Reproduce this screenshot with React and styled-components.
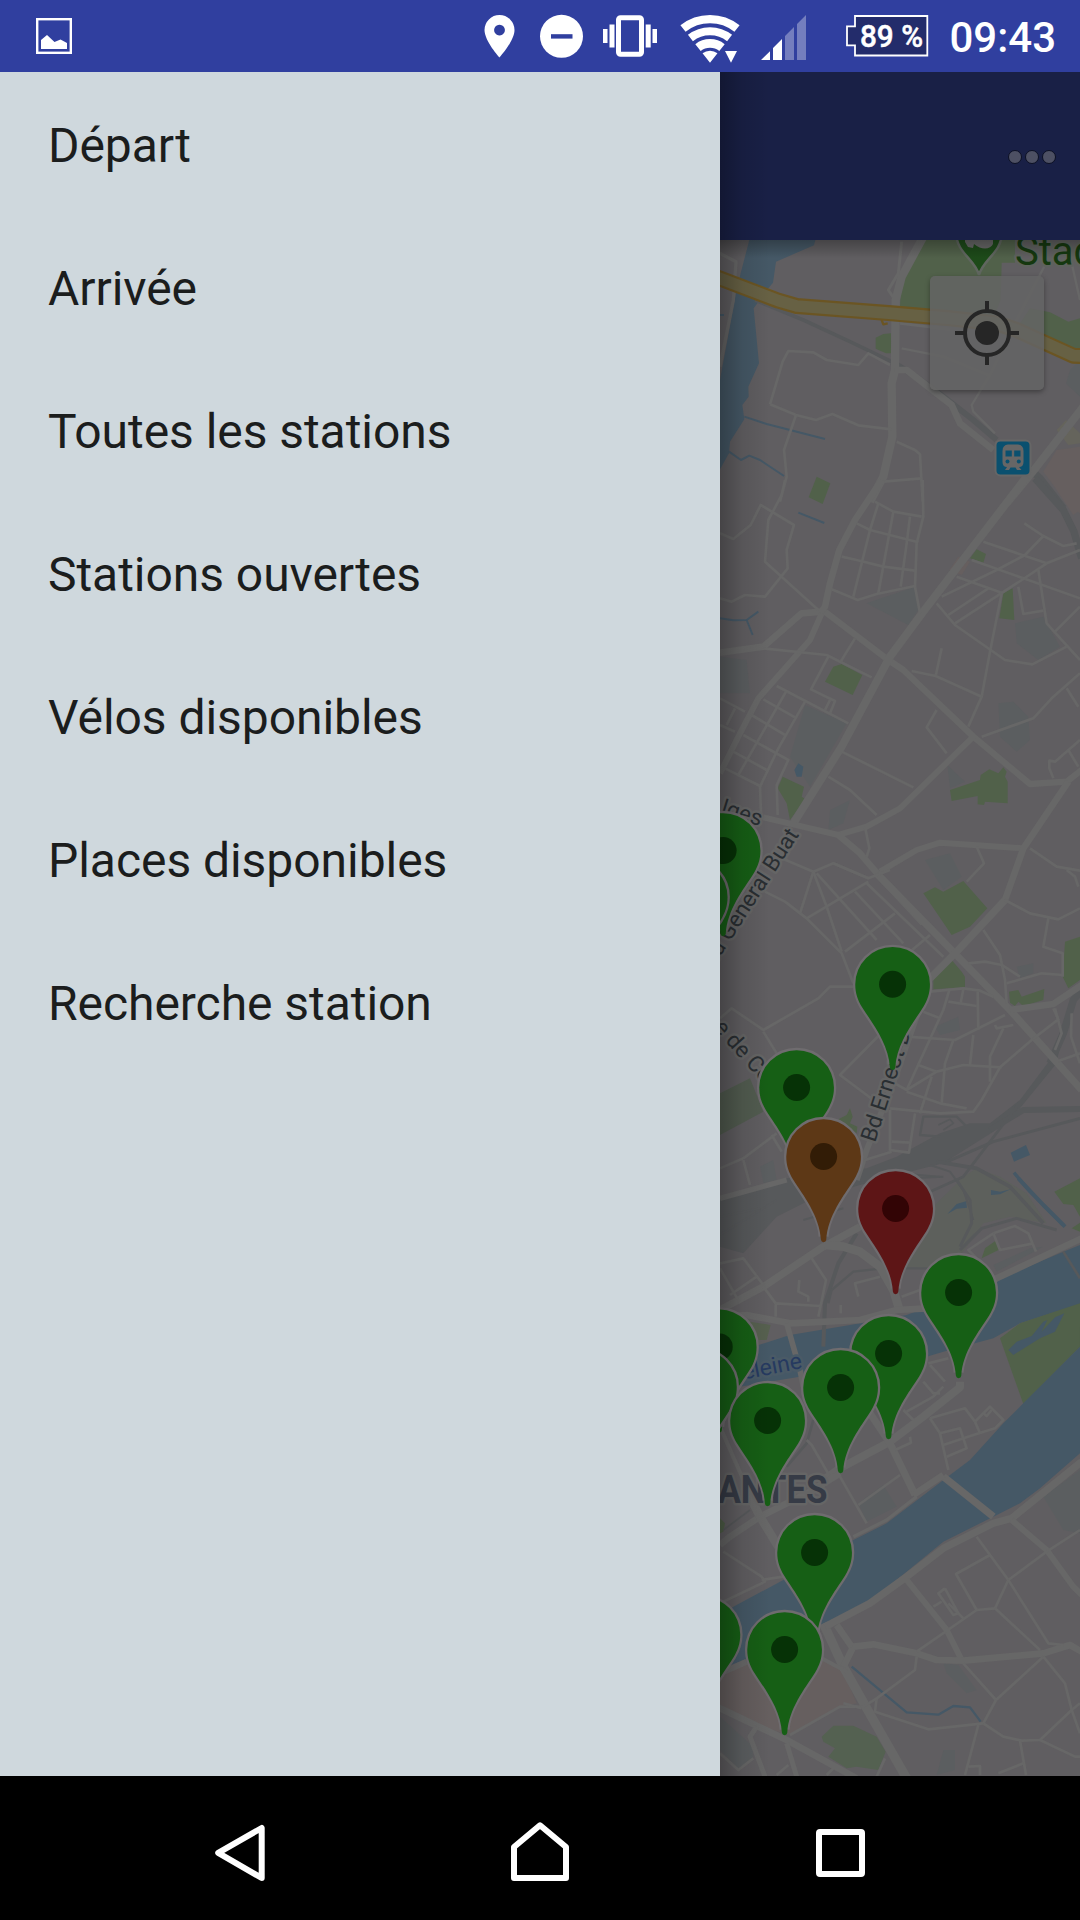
import React from "react";
import styled, { createGlobalStyle } from "styled-components";

const GlobalStyle = createGlobalStyle`
  body { margin: 0; background: #000; }
  svg { display: block; }
`;

const Screen = styled.div`
  display: flex;
  flex-direction: column;
  width: 1080px;
  height: 1920px;
  overflow: hidden;
  font-family: Roboto, "Noto Sans", sans-serif;
`;

const StatusBar = styled.header`
  display: flex;
  align-items: center;
  height: 72px;
  flex: none;
  background: #303f9f;
  color: #fff;
`;

const StatusIcon = styled.svg`
  flex: none;
  height: 72px;
  width: ${(p) => p.$w}px;
  margin-left: ${(p) => p.$gap};
`;

const Clock = styled.time`
  margin-left: 20px;
  font-size: 42px;
  font-weight: 500;
  line-height: 72px;
  white-space: nowrap;
  padding-top: 3px;
`;

const Main = styled.main`
  display: flex;
  height: 1704px;
  flex: none;
`;

const Drawer = styled.nav`
  width: 720px;
  flex: none;
  background: #cfd8dd;
`;

const MenuList = styled.ul`
  list-style: none;
  margin: 0;
  padding: 0;
`;

const MenuItem = styled.li`
  display: flex;
  align-items: center;
  height: 143px;
  padding: 4px 48px 0;
  box-sizing: border-box;
  font-size: 48px;
  letter-spacing: -0.05px;
  color: #1b1d1d;
`;

const Content = styled.section`
  position: relative;
  display: flex;
  flex-direction: column;
  width: 360px;
  flex: none;
`;

const DrawerShadow = styled.div`
  position: absolute;
  inset: 0 auto 0 0;
  width: 50px;
  background: linear-gradient(90deg, rgba(0, 0, 0, 0.28), rgba(0, 0, 0, 0.09) 45%, rgba(0, 0, 0, 0));
`;

const Toolbar = styled.div`
  display: flex;
  align-items: center;
  justify-content: flex-end;
  gap: 3px;
  height: 168px;
  flex: none;
  box-sizing: border-box;
  padding: 2px 24px 0 0;
  background: #192046;
`;

const Dot = styled.span`
  width: 12px;
  height: 12px;
  border-radius: 50%;
  background: #4d5063;
  border: 1px solid #0c1024;
`;

const MapArea = styled.div`
  position: relative;
  height: 1536px;
  overflow: hidden;
  background: #605e61;
`;

const MapShade = styled.div`
  position: absolute;
  inset: 0 0 auto 0;
  height: 18px;
  background: linear-gradient(rgba(0, 0, 0, 0.28), rgba(0, 0, 0, 0));
`;

const LocateButton = styled.button`
  position: absolute;
  top: 36px;
  right: 36px;
  width: 114px;
  height: 114px;
  padding: 0;
  border: 0;
  border-radius: 5px;
  display: grid;
  place-items: center;
  background: rgba(100, 100, 100, 0.86);
  box-shadow: 0 2px 5px rgba(0, 0, 0, 0.35);
`;

const NavBar = styled.footer`
  display: grid;
  grid-template-columns: repeat(3, 300px);
  justify-content: center;
  justify-items: center;
  align-items: center;
  height: 144px;
  flex: none;
  background: #000;
`;

const ITEMS = [
  "Départ",
  "Arrivée",
  "Toutes les stations",
  "Stations ouvertes",
  "Vélos disponibles",
  "Places disponibles",
  "Recherche station",
];

const PINS = [
  [723.1, 850.5, "green"],
  [690.2, 897, "green"],
  [892.6, 984.3, "green"],
  [796.6, 1087.5, "green"],
  [823.6, 1156.5, "orange"],
  [895.6, 1208.5, "red"],
  [958.6, 1292.5, "green"],
  [719.2, 1346.9, "green"],
  [888.6, 1353.5, "green"],
  [699.4, 1386.9, "green"],
  [840.6, 1387.5, "green"],
  [767.6, 1420.5, "green"],
  [814.6, 1552.5, "green"],
  [702.9, 1634.5, "green"],
  [784.6, 1649.5, "green"],
];

const PIN_COLORS = {
  green: ["#165f15", "#063206"],
  orange: ["#5d3816", "#321c06"],
  red: ["#5d1516", "#320405"],
};

const WATER = "#455866";
const PARK = "#51614a";
const ROAD = "#676767";
const RAIL = "#57595b";
const BUILT = "#5b5e60";
const PINK = "#665f5f";

// Each tile keeps its own 3x grid: origin, then layers from bottom to top.
const TILES = [
  {
    at: [710, 60],
    areas: [
      [WATER, "118,540 118,480 316,480 316,540 312,556 198,605 189,668 175,685 131,745 147,910 115,980 116,1010 97,1035 103,1078 60,1145 57,1180 30,1228 30,960 78,700 92,640"],
      [PARK, "640,540 915,540 915,608 875,608 872,720 850,775 570,740 574,665"],
      [PARK, "930,790 960,745 1020,757 1075,785 1110,775 1110,880 1080,870 1000,830"],
      [PARK, "497,833 520,822 543,820 543,880 528,880 497,866"],
      [BUILT, "1080,930 1110,900 1110,1010 1068,970"],
      ["#65645c", "1040,1110 1068,1080 1110,1120 1110,1150 1075,1155"],
      [PINK, "1110,1160 1040,1170 1000,1235 1080,1340 1110,1360"],
    ],
    lines: [
      [RAIL, 11, "135,720 280,780 420,845 545,905"],
      [RAIL, 18, "545,905 610,945 700,1010 790,1080 860,1140"],
      [RAIL, 22, "940,1210 990,1255 1060,1345"],
      [WATER, 6, "103,1070 170,1092 345,1137"],
      [WATER, 6, "57,1175 93,1200 118,1187 150,1200 222,1248"],
      [WATER, 6, "30,765 42,765"],
      [ROAD, 25, "640,530 575,650 557,720 555,930 545,970 547,1130 520,1250 480,1325"],
      [ROAD, 20, "555,930 590,930 725,1035 750,1090 850,1170"],
      [ROAD, 24, "1120,1040 980,1220 890,1330"],
      [ROAD, 9, "575,545 565,640 535,690 550,712"],
      [ROAD, 8, "180,1033 218,905 235,873 310,877 350,900 445,915 475,880 540,915"],
      [ROAD, 8, "180,1033 258,1065 318,1080 367,1062 445,1096 545,1108"],
      [ROAD, 8, "258,1065 222,1170 230,1250 210,1325"],
      [ROAD, 8, "560,1145 615,1170 630,1183 638,1325"],
      [ROAD, 8, "520,1265 635,1255"],
      [ROAD, 7, "575,865 700,890 835,945"],
      [ROAD, 7, "1005,615 915,790 840,945 785,1035 790,1055 855,1120"],
      [ROAD, 10, "20,575 78,605 70,720 30,920"],
      [ROAD, 7, "1085,610 1110,720"],
      [ROAD, 8, "570,790 720,808"],
      ["#6b5523", 7, "515,780 520,793 533,790"],
      ["#6b5523", 48, "10,648 205,722 260,738 545,760 720,775 860,790 920,810 1090,887 1120,888"],
      ["#676144", 35, "10,648 205,722 260,738 545,760 720,775 860,790 920,810 1090,887 1120,888"],
    ],
  },
  {
    at: [710, 480],
    areas: [
      [BUILT, "470,370 615,320 625,390 595,435"],
      [BUILT, "915,430 1000,410 1050,500 985,540 920,490"],
      [BUILT, "285,675 410,730 300,920 240,830"],
      [BUILT, "865,670 910,665 955,710 960,780 920,815 870,770"],
      [BUILT, "30,530 110,540 120,640 30,640"],
      [BUILT, "645,1140 720,1120 755,1190 700,1230"],
      [BUILT, "360,990 420,960 400,1030 355,1050"],
      [BUILT, "712,855 765,905 720,925"],
      [PINK, "1020,0 1110,0 1110,90 1090,105"],
      [PINK, "718,270 745,230 780,245 755,285"],
      [PARK, "320,-10 361,10 338,72 296,52"],
      [PARK, "800,208 828,222 820,248 780,235"],
      [PARK, "880,340 908,325 913,420 868,415"],
      [PARK, "370,560 395,552 457,585 428,645 345,605"],
      [PARK, "218,890 282,920 275,950 286,957 240,1020 230,970 203,925"],
      [PARK, "720,930 810,900 812,885 838,868 865,880 880,862 890,875 885,890 893,905 893,970 825,965 822,975 803,973 803,948 725,963"],
      [PARK, "640,1240 675,1222 700,1235 760,1203 832,1285 780,1340 725,1365"],
      [WATER, "265,850 280,860 275,890 260,890 253,870"],
    ],
    lines: [
      [RAIL, 22, "975,-5 1060,90 1092,155 1115,235"],
      [WATER, 6, "265,98 343,129"],
      [WATER, 6, "30,415 70,421 110,420 145,395"],
      [WATER, 6, "110,420 128,465"],
      [ROAD, 20, "515,0 435,120 388,210 360,310 345,380 335,395 275,400 160,500 30,518"],
      [ROAD, 18, "335,400 300,480 145,655 90,760 30,880"],
      [ROAD, 19, "345,395 535,540 580,570 790,770 960,912 1070,905 1115,870"],
      [ROAD, 24, "950,-10 640,395 540,530 395,800 250,1030"],
      [ROAD, 18, "790,770 570,985 470,1040 385,1065 160,1012"],
      [ROAD, 20, "385,1065 450,1120 510,1190 640,1330"],
      [ROAD, 18, "510,1175 620,1110 690,1088 940,1105"],
      [ROAD, 20, "1075,905 940,1105 885,1260"],
      ...[
        "30,160 70,177 122,135 152,75 252,135 230,210 233,265 165,350 105,345 65,365 30,355",
        "225,0 215,45 175,120 165,245 325,390",
        "638,0 640,110 620,190 615,320 630,400",
        "495,65 550,95 635,110",
        "505,70 480,150 430,350",
        "550,95 505,340",
        "600,110 590,190 572,320",
        "440,130 480,150 625,187",
        "395,230 440,240 520,260 615,272",
        "365,328 443,360 500,342 615,318",
        "820,185 1010,250 1110,210",
        "943,130 1000,168 1060,198 1100,190",
        "1000,168 945,225 860,270 695,350",
        "785,240 940,295 1110,355",
        "740,290 875,338",
        "1010,250 940,297 735,430",
        "835,325 715,405",
        "680,370 735,435 885,540 967,553 1070,500",
        "875,340 840,515 815,650 775,740",
        "925,320 940,402 1000,392",
        "985,270 1010,430 1110,540",
        "1110,380 1035,455",
        "695,505 677,588",
        "605,573 677,588 815,650",
        "160,505 350,525 485,592",
        "435,475 392,545",
        "355,530 303,628 375,663 360,700",
        "360,660 345,690",
        "200,618 415,730",
        "160,658 255,712",
        "125,705 225,765",
        "100,765 235,840 200,915 203,1005",
        "70,815 170,870",
        "45,865 150,918 153,1000",
        "228,635 85,885",
        "285,665 205,805 150,920",
        "30,655 105,695",
        "30,735 75,755",
        "75,685 50,735",
        "680,690 650,742 710,820",
        "815,770 970,715 1025,655 1110,580",
        "1070,625 1105,680",
        "395,815 610,922",
        "355,890 420,930 500,1005",
        "1110,780 1035,845 1018,842 1018,865 1030,895",
        "1075,810 1105,860",
        "465,1040 478,1105 470,1130",
        "215,1135 310,1175 370,1150 475,1195",
        "800,1100 822,1150 770,1205",
        "960,1105 1040,1160 1110,1172",
      ].map((p) => [ROAD, 8, p]),
    ],
  },
  {
    at: [710, 780],
    areas: [
      [BUILT, "675,740 745,710 750,750 690,765"],
      [BUILT, "920,560 970,550 970,580 930,595"],
      [BUILT, "150,1160 190,1140 200,1200 160,1210"],
      [PARK, "725,540 755,575 765,590 765,622 670,628 670,600"],
      [PARK, "1065,485 1110,470 1110,600 1075,625 1058,590"],
      [PARK, "897,635 925,630 935,650 1003,627 1000,660 940,678 925,665 915,678 900,668"],
      ["#525c50", "30,940 120,895 160,995 30,1065"],
      [PARK, "385,1018 410,1005 420,985 428,1010 420,1030 442,1040 440,1060"],
      ["#5d605c", "560,1460 650,1300 760,1190 800,1165 870,1190 950,1240 1010,1330 900,1310 820,1330 770,1400 720,1465 640,1465"],
      [RAIL, "30,1260 230,1195 470,1165 560,1130 690,1060 780,1030 840,1030 930,960 1020,840 1055,770 1040,850 930,985 850,1055 700,1150 560,1185 450,1215 300,1260 200,1310 100,1420 30,1400"],
      [WATER, "902,1118 948,1095 960,1125 912,1145"],
    ],
    lines: [
      [RAIL, 22, "1115,630 1090,660 1060,760 1020,850"],
      [RAIL, 18, "840,1050 940,990 1115,987"],
      [RAIL, 9, "700,1150 850,1085 1110,1015"],
      [RAIL, 8, "920,980 760,1190 650,1240"],
      [RAIL, 7, "690,1070 630,1065 640,1010 740,1010 770,1040"],
      [RAIL, 5, "685,1035 720,1018 730,1030 700,1050"],
      [RAIL, 11, "680,1145 800,1165 900,1220 1000,1330"],
      [RAIL, 6, "450,1210 560,1180 690,1190"],
      [RAIL, 6, "450,1235 600,1195 700,1190"],
      [RAIL, 6, "660,1155 720,1175 760,1230 790,1320"],
      [WATER, 10, "912,1178 960,1235 1060,1335"],
      [ROAD, 22, "500,280 900,690 1115,930"],
      [ROAD, 22, "885,360 740,515 660,595"],
      [ROAD, 20, "900,690 1030,672 1115,615"],
      [ROAD, 18, "655,610 560,880 470,1110 440,1200"],
      [ROAD, 16, "30,1255 230,1200"],
      ...[
        "165,335 225,365 290,415 395,520 430,610",
        "310,275 270,400",
        "310,275 350,380 395,515",
        "320,280 500,480",
        "290,415 475,305",
        "405,515 555,400",
        "435,335 580,490",
        "470,310 700,530",
        "370,250 475,295 540,270",
        "660,465 600,515",
        "820,450 870,525 885,600 890,670",
        "885,360 960,400 1045,418 1110,385",
        "1015,415 1000,500 1058,520 1058,590",
        "1070,270 1095,290 1105,320",
        "1058,585 995,580 890,610",
        "775,550 825,545 875,555 930,590",
        "430,620 360,620 325,655 160,750 65,685 30,715",
        "160,755 200,820",
        "660,635 760,625 810,632 850,650",
        "760,628 752,668",
        "718,630 700,690 590,930",
        "715,665 800,678",
        "803,635 805,750",
        "640,695 690,715",
        "590,770 735,780 885,705",
        "790,765 780,855",
        "855,735 860,745 910,735",
        "880,745 840,830 840,905",
        "730,780 705,850 695,970",
        "665,890 630,1000",
        "625,855 680,875 760,855 875,862",
        "680,875 590,930 545,905",
        "590,935 690,970 770,985",
        "540,985 690,1000 790,995 815,960 870,862 965,780 1045,718 1030,685",
        "540,990 540,1110 597,1118 615,1000",
        "545,1085 600,1088",
        "465,1140 545,1115",
        "505,768 390,885 490,960",
        "1110,820 1045,843",
        "1085,700 1083,770 1110,850",
        "1035,685 1055,760 1035,810",
        "30,1165 100,1135 200,1060",
        "100,1140 120,1215",
        "185,1065 215,1115",
      ].map((p) => [ROAD, 8, p]),
    ],
  },
  {
    at: [710, 1180],
    areas: [
      [WATER, "100,510 240,465 420,435 590,405 860,300 1060,215 1110,195 1110,372 930,430 850,475 700,515 600,545 440,560 260,592 90,620"],
      [PARK, "870,475 930,430 1110,370 1110,500 940,672"],
      [WATER, "895,510 920,485 965,468 1000,425 1012,420 995,455 1035,412 1063,400 1035,455 990,475 910,525"],
      [WATER, "843,30 870,35 902,28 870,43 843,45"],
      [WATER, "712,102 740,72 768,64 771,83 740,86"],
      [PARK, "1033,35 1110,-5 1110,110 1090,75 1060,72"],
      [PARK, "1085,145 1110,128 1110,155"],
      ["#56604f", "120,425 182,435 170,480 145,480"],
      [PARK, "815,235 825,205 860,180 870,208"],
      [BUILT, "850,255 960,205 1000,200 860,275"],
      [BUILT, "1110,740 1090,795 1110,795"],
    ],
    lines: [
      [RAIL, 12, "340,500 345,370 385,250 440,160"],
      [RAIL, 7, "355,370 365,330 430,275 520,265 720,265"],
      [RAIL, 9, "740,0 780,60 785,130 750,200"],
      [RAIL, 9, "750,210 815,145 920,115 1040,150"],
      [RAIL, 8, "1060,215 1110,295"],
      [RAIL, 8, "310,720 290,790 230,860"],
      [RAIL, 6, "30,165 200,60"],
      [RAIL, 6, "30,110 150,85"],
      [RAIL, 6, "280,120 400,85"],
      [WATER, 12, "925,-5 1000,75 1065,140"],
      [ROAD, 22, "20,395 160,320 340,200 450,140"],
      [ROAD, 26, "345,195 400,200 450,215 510,260 550,330 570,395"],
      [ROAD, 20, "30,410 110,405 240,430 450,420 560,390 650,385 860,295 1115,175"],
      [ROAD, 17, "230,430 270,570 280,620"],
      [ROAD, 24, "750,605 750,622 640,710 540,785 390,865 340,900"],
      [ROAD, 22, "480,700 540,790 615,945"],
      [ROAD, 12, "30,740 100,900"],
      ...[
        "30,250 100,235 160,315",
        "30,265 90,370",
        "140,290 60,345",
        "305,235 348,300 325,410",
        "330,378 197,370 197,410",
        "160,320 197,370",
        "268,300 265,335 295,350 295,365",
        "392,375 392,400",
        "510,290 435,310 445,350",
        "575,350 630,330",
        "655,550 715,535",
        "660,555 705,605",
        "640,605 670,640 690,640",
        "580,690 610,720",
        "590,695 670,650 700,620",
        "660,715 765,685 795,725 840,680 880,720 855,745 790,765 700,795",
        "660,715 690,760 715,870",
        "690,760 750,745 770,805 710,830",
        "795,725 810,760",
        "820,700 830,708 845,690",
        "290,780 305,795 360,890",
        "600,770 603,788 555,810",
        "850,160 915,138 955,160 978,215",
        "850,160 870,210 970,190",
        "800,235 775,210 850,160",
      ].map((p) => [ROAD, 8, p]),
    ],
  },
  {
    at: [710, 1460],
    areas: [
      [WATER, "1110,-340 940,-170 880,-110 780,0 720,45 530,190 430,240 220,360 70,440 30,470 30,630 100,600 180,580 345,490 470,430 590,335 700,245 850,170 930,130 990,85 1110,-20"],
      [BUILT, "445,130 520,75 560,140 470,185"],
      [BUILT, "30,770 130,860 130,900 85,925 30,870"],
      [BUILT, "1110,30 1110,220 1060,210 1000,110"],
      [BUILT, "700,610 745,615 800,690 770,700 710,640"],
      [BUILT, "700,870 735,870 735,930 680,945"],
      [PINK, "30,650 110,610 340,600 400,635 440,730 390,740 240,825 150,800 30,735"],
      ["#546151", "335,830 370,797 430,797 500,830 527,875 505,930 440,920 410,925 355,890 375,865 340,845"],
      [PARK, "30,175 45,190 40,215 30,220"],
    ],
    lines: [
      [WATER, 7, "425,620 590,757 685,764 730,738 780,742 812,785"],
      [RAIL, 5, "40,210 120,150"],
      [ROAD, 28, "340,490 400,620 490,780 590,955"],
      [ROAD, 20, "20,740 230,840 440,955"],
      [ROAD, 20, "390,40 300,95 150,170 60,230 30,255"],
      [ROAD, 26, "110,90 150,170 205,260"],
      [ROAD, 22, "345,500 480,430 590,350 700,265 850,190 905,175 1115,5"],
      [ROAD, 22, "700,50 850,170"],
      [ROAD, 20, "610,105 700,45"],
      [ROAD, 10, "430,230 530,180 620,110"],
      [ROAD, 18, "905,180 1010,270 1090,380 1115,405"],
      [ROAD, 18, "590,360 710,510 755,600"],
      [ROAD, 20, "400,620 430,560 490,553 620,580 680,600 760,602 1000,580 1080,555 1115,575"],
      [ROAD, 20, "380,495 425,560"],
      [ROAD, 18, "20,645 110,605"],
      [ROAD, 12, "335,595 410,635"],
      [ROAD, 15, "140,800 120,830 165,950"],
      [ROAD, 15, "230,850 260,950"],
      ...[
        "390,50 470,190",
        "445,135 570,45",
        "40,275 155,350 165,365 30,430",
        "155,360 220,350",
        "800,230 840,285 895,360 855,445 800,450 620,575",
        "840,285 738,342 800,450",
        "895,360 1010,275 1110,210",
        "895,360 1015,550 1060,555",
        "855,445 990,570",
        "705,385 685,400 730,465 745,460 705,385",
        "670,440 695,425",
        "715,430 760,475",
        "620,590 615,630 500,715 495,755 655,808 820,790",
        "760,610 858,720 1000,590",
        "858,720 820,790",
        "805,795 765,945",
        "820,790 880,830 935,842 990,840 1085,750 1110,730",
        "990,840 1095,890 1110,890",
        "1000,590 1065,670 1085,750 1110,820",
        "930,842 948,945",
        "200,945 235,915",
        "240,825 390,740 460,740 500,715",
        "400,730 455,745",
        "525,895 500,950",
        "30,880 85,930 130,895",
        "350,945 370,925",
        "775,920 810,918 810,945",
        "865,940 940,910",
      ].map((p) => [ROAD, 8, p]),
    ],
  },
];

const Label = styled.text`
  font-family: Roboto, sans-serif;
  font-size: ${(p) => p.$size}px;
  font-weight: ${(p) => p.$weight || 400};
  fill: ${(p) => p.$color || "#292e32"};
  stroke: ${(p) => p.$halo || "#656565"};
  stroke-width: 5px;
  stroke-linejoin: round;
  paint-order: stroke;
`;

function Pin({ x, y, tone }) {
  const [body, dot] = PIN_COLORS[tone];
  const side = "C-12,178 -60,118 -92,68 C-104,48 -112,28 -112,0 A112,112 0 0 1 112,0 C112,28 104,48 92,68 C60,118 12,178";
  return (
    <g transform={`translate(${x} ${y}) scale(0.33333)`}>
      <path d={`M-8,240 ${side} 8,240`} fill="none" stroke="#6f6c6f" strokeWidth="14" />
      <path d={`M-8,250 ${side} 8,250 Q7,257 0,257 Q-7,257 -8,250Z`} fill={body} />
      <circle r="40.5" fill={dot} />
    </g>
  );
}

function Tile({ tile }) {
  return (
    <g transform={`translate(${tile.at[0]} ${tile.at[1]}) scale(0.33333)`}>
      {tile.areas.map(([c, p], i) => (
        <polygon key={i} points={p} fill={c} />
      ))}
      {tile.lines.map(([c, w, p], i) => (
        <polyline key={i} points={p} fill="none" stroke={c} strokeWidth={w} strokeLinejoin="round" />
      ))}
    </g>
  );
}

function CityMap() {
  return (
    <svg width="360" height="1536" viewBox="720 240 360 1536">
      {TILES.map((t, i) => (
        <Tile key={i} tile={t} />
      ))}
      <path d="M956 232 C956 253 975 259 979 275 C983 259 1002 253 1002 232Z" fill="#1d4a19" stroke="#60665f" strokeWidth="2.5" />
      <path d="M965 238 V242 L968 247 L973 248 L974 244 C982 251 991 249 993 244 V238Z" fill="#666" />
      <Label x="1015" y="264.500" $size={40} $color="#15380f" $halo="#5e625d">Stade</Label>
      <g>
        <rect x="994.5" y="439.5" width="37" height="37" rx="6" fill="#666" />
        <rect x="996.5" y="441.5" width="33" height="33" rx="4" fill="#0a506f" />
        <path d="M1002.5 451 Q1002.5 445 1008 444.500 H1018 Q1023.500 445 1023.500 451 V462 Q1023.500 467 1019 467 L1021.500 470 H1017 L1015.500 467.500 H1010.500 L1009 470 H1005 L1007 467 Q1002.500 467 1002.500 462Z" fill="#666" />
        <path d="M1005.500 450.500 h6.300 v6 h-6.300Z M1014.200 450.500 h6.300 v6 h-6.300Z" fill="#0a506f" />
        <circle cx="1007.500" cy="461.500" r="2" fill="#0a506f" />
        <circle cx="1018.800" cy="461.500" r="2" fill="#0a506f" />
      </g>
      <Label transform="translate(720 814) rotate(17)" $size={22.5}>lges</Label>
      <Label transform="translate(799.500 834.500) rotate(-57)" textAnchor="end" $size={22.5}>du General Buat</Label>
      <Label transform="translate(713 1028) rotate(48)" $size={22.5}>e de Co</Label>
      <Label transform="translate(875 1143) rotate(-72)" $size={22.5}>Bd Ernest D</Label>
      <Label transform="translate(803 1368) rotate(-11)" textAnchor="end" $size={23} $color="#263a60" $halo="#4a5a66">Madeleine</Label>
      <Label x="827.500" y="1502.500" textAnchor="end" textLength="135" lengthAdjust="spacingAndGlyphs" $size={39} $weight={700} $color="#363b46">NANTES</Label>
      {PINS.map(([x, y, tone], i) => (
        <Pin key={i} x={x} y={y} tone={tone} />
      ))}
    </svg>
  );
}

function StatusIcons() {
  return (
    <>
      <StatusIcon $w={36} $gap="36px" viewBox="36 0 36 72">
        <rect x="37.200" y="19.200" width="33.600" height="33.600" fill="none" stroke="#fff" strokeWidth="2.400" />
        <path d="M41 49V40L47 35L54.500 42L60.500 39.500L67 43V49Z" fill="#fff" />
      </StatusIcon>
      <StatusIcon $w={31} $gap="auto" viewBox="484 0 31 72">
        <path fillRule="evenodd" d="M499.500 15A15 15 0 0 1 514.500 30C514.500 41 499.500 57.500 499.500 57.500S484.500 41 484.500 30A15 15 0 0 1 499.500 15ZM499.500 24.700a5.400 5.400 0 1 0 0.010 0Z" fill="#fff" />
      </StatusIcon>
      <StatusIcon $w={43} $gap="25px" viewBox="540 0 43 72">
        <circle cx="561.500" cy="36.300" r="21.500" fill="#fff" />
        <rect x="551" y="34.200" width="21.500" height="4.400" fill="#303f9f" />
      </StatusIcon>
      <StatusIcon $w={54} $gap="20px" viewBox="603 0 54 72">
        <rect x="618.500" y="17.800" width="23" height="36.500" rx="2" fill="none" stroke="#fff" strokeWidth="5" />
        <path d="M609.500 24.500h5v23h-5ZM603 29h4.500v14h-4.500ZM645.700 24.500h5v23h-5ZM652.500 29h4.500v14h-4.500Z" fill="#fff" />
      </StatusIcon>
      <StatusIcon $w={60} $gap="23px" viewBox="680 0 60 72">
        <g transform="translate(710 62.700) scale(0.33333)">
          <g fill="none" stroke="#fff">
            <path strokeWidth="25" d="M-81,-102.300A130.500,130.500 0 0 1 81,-102.300" />
            <path strokeWidth="24" d="M-58.700,-74.100A94.500,94.500 0 0 1 58.700,-74.100" />
            <path strokeWidth="26" d="M-36,-45.500A58,58 0 0 1 36,-45.500" />
          </g>
          <path d="M0,0L-22.400,-28.200A36,36 0 0 1 22.400,-28.200Z M45,-35H81L63,0Z" fill="#fff" />
        </g>
      </StatusIcon>
      <StatusIcon $w={46} $gap="21px" viewBox="761 0 46 72">
        <path d="M761 60L770 51.300V60ZM773 60V48L782 39V60Z" fill="#fff" />
        <path d="M785 60V36L794 27V60ZM797 60V24L806 15V60Z" fill="#fff" opacity="0.330" />
      </StatusIcon>
      <StatusIcon $w={83} $gap="39px" viewBox="846 0 83 72">
        <path d="M855 16H927.300V55.500H855V45.300H847V26.300H855Z" fill="#232c6b" stroke="#fff" strokeWidth="1.800" />
        <text x="860" y="46.500" fill="#fff" stroke="#fff" strokeWidth="0.500" fontFamily="Roboto, sans-serif" fontWeight="500" fontSize="31" textLength="63" lengthAdjust="spacingAndGlyphs">89 %</text>
      </StatusIcon>
    </>
  );
}

export default function App() {
  return (
    <>
      <GlobalStyle />
      <Screen>
        <StatusBar>
          <StatusIcons />
          <Clock>09:43</Clock>
          <StatusIcon $w={24} $gap="0" aria-hidden="true" />
        </StatusBar>
        <Main>
          <Drawer>
            <MenuList>
              {ITEMS.map((label) => (
                <MenuItem key={label}>{label}</MenuItem>
              ))}
            </MenuList>
          </Drawer>
          <Content>
            <Toolbar>
              <Dot />
              <Dot />
              <Dot />
            </Toolbar>
            <MapArea>
              <CityMap />
              <MapShade />
              <LocateButton aria-label="Ma position">
                <svg width="66" height="66" viewBox="-33 -33 66 66">
                  <circle r="12" fill="#262626" />
                  <circle r="22" fill="none" stroke="#262626" strokeWidth="4" />
                  <path d="M0-32V-22M0 22V32M-32 0H-22M22 0H32" stroke="#262626" strokeWidth="4" />
                </svg>
              </LocateButton>
            </MapArea>
            <DrawerShadow />
          </Content>
        </Main>
        <NavBar>
          <svg width="54" height="144" viewBox="213 1776 54 144">
            <path d="M218.200 1852.800L261.700 1828V1878Z" fill="none" stroke="#fff" strokeWidth="6" strokeLinejoin="round" />
          </svg>
          <svg width="60" height="144" viewBox="510 1776 60 144">
            <path d="M514 1878V1847L540 1825.300L566 1847V1878Z" fill="none" stroke="#fff" strokeWidth="6" strokeLinejoin="round" />
          </svg>
          <svg width="54" height="144" viewBox="813 1776 54 144">
            <rect x="819" y="1832" width="43" height="42" rx="1" fill="none" stroke="#fff" strokeWidth="6" strokeLinejoin="round" />
          </svg>
        </NavBar>
      </Screen>
    </>
  );
}
